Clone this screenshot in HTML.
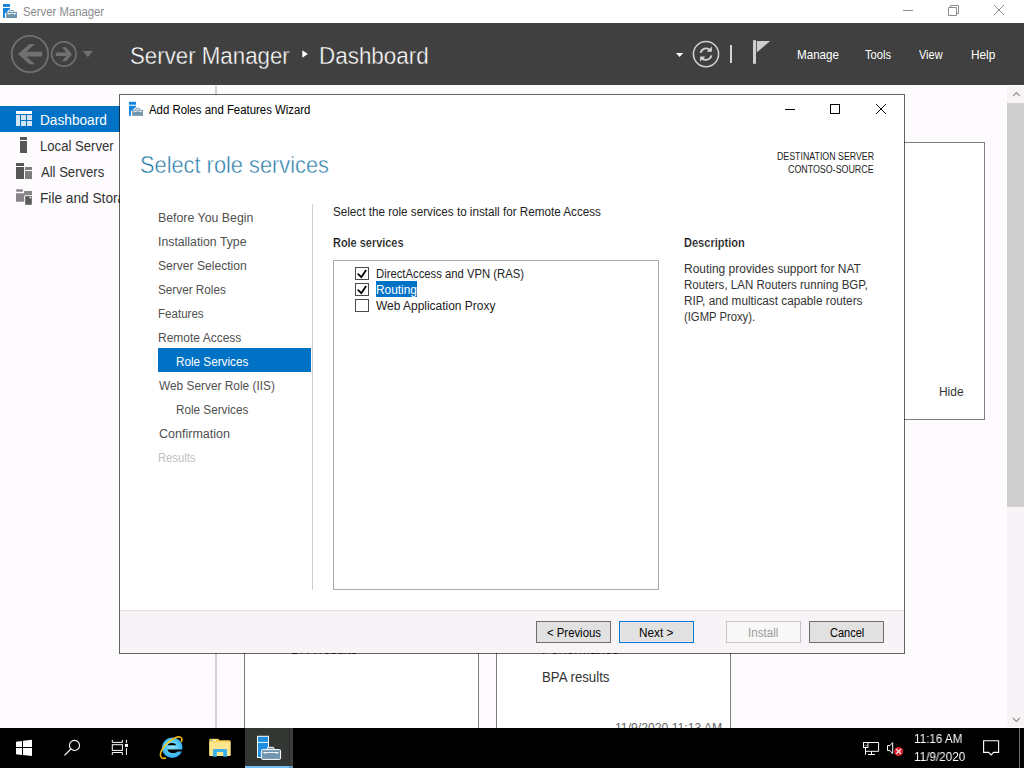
<!DOCTYPE html>
<html lang="en">
<head>
<meta charset="utf-8">
<title>Server Manager</title>
<style>
html,body{margin:0;padding:0;}
body{width:1024px;height:768px;overflow:hidden;position:relative;background:#fefbfe;font-family:"Liberation Sans",sans-serif;}
.a{position:absolute;}
.t{position:absolute;white-space:pre;line-height:normal;transform-origin:0 0;font-family:"Liberation Sans",sans-serif;}
#titlebar{left:0;top:0;width:1024px;height:23px;background:#ffffff;}
#header{left:0;top:23px;width:1024px;height:62px;background:#404040;}
#navsel{left:0;top:106px;width:216px;height:26px;background:#0072c6;}
#vline{left:215px;top:86px;width:2px;height:642px;background:#d2d0d2;}
.panel{background:#ffffff;border:1px solid #7f7d7f;box-sizing:border-box;}
#scroll{left:1007px;top:86px;width:17px;height:641px;background:#f7f3f7;}
#thumb{left:1007px;top:103px;width:17px;height:404px;background:#cecece;}
#taskbar{left:0;top:728px;width:1024px;height:40px;background:#000000;}
#dialog{left:119px;top:94px;width:786px;height:560px;background:#ffffff;background-clip:padding-box;border:1px solid rgba(0,0,0,0.61);box-sizing:border-box;}
#footer{left:120px;top:610px;width:784px;height:43px;background:#f7f3f7;border-top:1px solid #e0dde0;box-sizing:border-box;}
#wsel{left:158px;top:348px;width:153px;height:24px;background:#0072c6;}
#wsep{left:312px;top:204px;width:1px;height:386px;background:#d0d0d0;}
#list{left:333px;top:260px;width:326px;height:330px;border:1px solid #aba7ad;box-sizing:border-box;background:#fff;}
.cb{width:14px;height:13px;border:1px solid #4a4a4a;box-sizing:border-box;background:#fff;left:355px;}
#rsel{left:376px;top:281px;width:41px;height:16px;background:#0072c6;}
.btn{top:621px;width:75px;height:22px;box-sizing:border-box;background:#e1e1e1;border:1px solid #6f6f6f;}
</style>
</head>
<body>
<!-- ===== main window ===== -->
<div class="a" id="titlebar"></div>
<div class="a" id="header"></div>
<div class="a" id="navsel"></div>
<div class="a" id="vline"></div>
<div class="a panel" style="left:860px;top:142px;width:125px;height:278px;"></div>
<div class="a panel" style="left:244px;top:600px;width:235px;height:140px;"></div>
<div class="a panel" style="left:496px;top:600px;width:235px;height:140px;"></div>
<div class="a" id="scroll"></div>
<div class="a" id="thumb"></div>
<svg class="a" style="left:0;top:0" width="1024" height="768" viewBox="0 0 1024 768">
<!-- title bar app icon -->
<g id="appicon">
<rect x="3" y="4" width="7" height="2.900" fill="#1583e0"/>
<path d="M3 8h7v1.100L5.600 12.900L4.900 13.300V18H3z" fill="#1583e0"/>
<path d="M9.800 12v-0.800q0-0.700 0.700-0.700h2.400q0.700 0 0.700 0.700V12" fill="none" stroke="#6e93ad" stroke-width="1"/>
<rect x="6.200" y="12" width="10.800" height="6" fill="#6e93ad"/>
<path d="M7 12.900h9.400l-0.500 0.900h-0.700l-0.700 1.200l-0.700-1.200h-4.200l-0.700 1.200l-0.700-1.200h-0.700z" fill="#ffffff"/>
</g>
<!-- window controls -->
<g stroke="#8a8a8a" stroke-width="1" fill="none">
<path d="M903 10.5H913"/>
<path d="M948.5 7.5h8v8h-8zM950.5 7.5v-2h8v8h-2"/>
<path d="M994 5L1004 15M1004 5L994 15"/>
</g>
<!-- nav back / forward -->
<g fill="none" stroke="#717171">
<circle cx="29.900" cy="54" r="18.200" stroke-width="1.800"/>
<circle cx="63.900" cy="54.050" r="12.200" stroke-width="1.600"/>
</g>
<path d="M18.100 54.100L29.400 43.900H35L26.400 51.750H42.250V56.400H26.400L35 64.200H29.400z" fill="#717171"/>
<path d="M72 54.200L66.100 47.200H61.900L66.400 52.500H55.750V56H66.400L61.900 61.200H66.100z" fill="#717171"/>
<path d="M82.800 51.100H92.900L87.850 57.200z" fill="#717171"/>
<!-- breadcrumb arrow -->
<path d="M302.300 50.200L307.900 54L302.300 57.800z" fill="#ffffff"/>
<!-- header right icons -->
<path d="M676 53h7.2l-3.6 4z" fill="#ffffff"/>
<circle cx="706" cy="54.1" r="12.6" fill="none" stroke="#d2d2d2" stroke-width="1.5"/>
<g fill="none" stroke="#d2d2d2" stroke-width="1.9">
<path d="M700.6 52.8a5.6 5.6 0 0 1 9.6-2.6"/>
<path d="M711.4 55.4a5.6 5.6 0 0 1-9.6 2.6"/>
</g>
<path d="M711.9 46.6v5.2h-5.2z" fill="#d2d2d2"/>
<path d="M700.1 61.6v-5.2h5.2z" fill="#d2d2d2"/>
<rect x="730" y="45" width="2" height="18" fill="#d2d2d2"/>
<rect x="753" y="40.2" width="3" height="23.6" fill="#cfcfcf"/>
<path d="M756.8 41h13.4l-13.4 11.6z" fill="#cfcfcf"/>
<!-- side nav icons -->
<rect x="16" y="111" width="16" height="3" fill="#ffffff"/>
<g fill="#d3e5f7">
<rect x="16" y="115" width="4" height="11"/>
<rect x="21" y="115" width="5" height="5"/><rect x="27" y="115" width="5" height="5"/>
<rect x="21" y="121" width="5" height="5"/><rect x="27" y="121" width="5" height="5"/>
</g>
<g fill="#575757">
<rect x="20" y="137" width="7" height="3"/><rect x="20" y="141" width="7" height="12"/>
<rect x="16" y="163" width="8" height="3"/><rect x="16" y="167" width="8" height="12"/>
</g>
<g fill="#7e7e7e">
<rect x="25" y="167" width="7" height="3"/><rect x="25" y="171" width="7" height="8"/>
</g>
<rect x="16" y="189.200" width="7" height="2.500" rx="0.900" fill="#878587"/>
<path d="M16 193.300h7.200q1 0 1-1v-1.200H32v10.600H16z" fill="#878587"/>
<path d="M24.200 205.800v-9.600q0-1 1-1h6.500q1 0 1 1v9.600z" fill="#fefbfe"/>
<rect x="25.200" y="196.200" width="6.600" height="8.600" fill="#595959"/>
<circle cx="30.300" cy="197.700" r="0.900" fill="#e8e6e8"/>
<!-- scrollbar arrows -->
<g fill="none" stroke="#8c8c8c" stroke-width="1.1">
<path d="M1013 96.200L1016.400 92.600L1019.800 96.200"/>
<path d="M1013 718L1016.400 721.500L1019.800 718"/>
</g>

</svg>
<span class="t" style="left:22.98px;top:5px;font-size:12px;color:#8a8a8a;font-weight:400;transform:scaleX(0.9429);">Server Manager</span>
<span class="t" style="left:129.51px;top:42px;font-size:24.5px;color:#ffffff;font-weight:400;transform:scaleX(0.9094);-webkit-text-stroke:0.4px #404040;">Server Manager</span>
<span class="t" style="left:318.62px;top:42px;font-size:24.5px;color:#ffffff;font-weight:400;transform:scaleX(0.9156);-webkit-text-stroke:0.4px #404040;">Dashboard</span>
<span class="t" style="left:796.81px;top:47px;font-size:13px;color:#ffffff;font-weight:400;transform:scaleX(0.8944);">Manage</span>
<span class="t" style="left:864.82px;top:47px;font-size:13px;color:#ffffff;font-weight:400;transform:scaleX(0.8627);">Tools</span>
<span class="t" style="left:918.78px;top:47px;font-size:13px;color:#ffffff;font-weight:400;transform:scaleX(0.8444);">View</span>
<span class="t" style="left:970.89px;top:47px;font-size:13px;color:#ffffff;font-weight:400;transform:scaleX(0.9091);">Help</span>
<span class="t" style="left:39.96px;top:112px;font-size:14px;color:#ffffff;font-weight:400;transform:scaleX(0.9755);">Dashboard</span>
<span class="t" style="left:39.94px;top:138px;font-size:14px;color:#333333;font-weight:400;transform:scaleX(0.9369);">Local Server</span>
<span class="t" style="left:40.82px;top:164px;font-size:14px;color:#333333;font-weight:400;transform:scaleX(0.9334);">All Servers</span>
<span class="t" style="left:39.56px;top:190px;font-size:14px;color:#333333;font-weight:400;transform:scaleX(0.9771);">File and Storage Services</span>
<span class="t" style="left:938.85px;top:385px;font-size:12.5px;color:#333333;font-weight:400;transform:scaleX(0.9549);">Hide</span>
<span class="t" style="left:290.75px;top:641px;font-size:14px;color:#333333;font-weight:400;transform:scaleX(0.9251);">BPA results</span>
<span class="t" style="left:541.68px;top:641px;font-size:14px;color:#333333;font-weight:400;transform:scaleX(0.9626);">Performance</span>
<span class="t" style="left:541.73px;top:669px;font-size:14px;color:#333333;font-weight:400;transform:scaleX(0.9461);">BPA results</span>
<span class="t" style="left:614.70px;top:720px;font-size:13px;color:#666666;font-weight:400;transform:scaleX(0.9370);">11/9/2020 11:13 AM</span>
<!-- ===== taskbar ===== -->
<div class="a" id="taskbar"></div>
<!-- ===== dialog ===== -->
<div class="a" id="dialog"></div>
<div class="a" id="footer"></div>
<div class="a" id="wsel"></div>
<div class="a" id="wsep"></div>
<div class="a" id="list"></div>
<div class="a cb" style="top:267px"></div>
<div class="a cb" style="top:283px"></div>
<div class="a cb" style="top:299px"></div>
<div class="a" id="rsel"></div>
<div class="a btn" style="left:536px"></div>
<div class="a btn" style="left:619px;border-color:#0078d7;box-shadow:inset 0 0 0 1px #ece7e6;"></div>
<div class="a btn" style="left:726px;background:#f9f8f9;border-color:#c2c5c5;"></div>
<div class="a btn" style="left:809px"></div>
<svg class="a" style="left:0;top:0" width="1024" height="768" viewBox="0 0 1024 768">
<!-- dialog icon -->
<g transform="translate(126,97.8)">
<rect x="3" y="4" width="7" height="2.900" fill="#1583e0"/>
<path d="M3 8h7v1.100L5.600 12.900L4.900 13.300V18H3z" fill="#1583e0"/>
<path d="M9.800 12v-0.800q0-0.700 0.700-0.700h2.400q0.700 0 0.700 0.700V12" fill="none" stroke="#6e93ad" stroke-width="1"/>
<rect x="6.200" y="12" width="10.800" height="6" fill="#6e93ad"/>
<path d="M7 12.900h9.400l-0.500 0.900h-0.700l-0.700 1.200l-0.700-1.200h-4.200l-0.700 1.200l-0.700-1.200h-0.700z" fill="#ffffff"/>
</g>
<!-- dialog window controls -->
<g stroke="#000000" stroke-width="1" fill="none">
<path d="M785 109.5H795"/>
<rect x="830.5" y="104.5" width="9" height="9"/>
<path d="M876 104L886 114M886 104L876 114" stroke-width="0.95"/>
</g>
<!-- check marks -->
<g fill="none" stroke="#000000" stroke-width="1.7">
<path d="M357.7 273.7L361.3 277.1L366.2 270"/>
<path d="M357.7 289.7L361.3 293.1L366.2 286"/>
</g>
<!-- taskbar: active app -->
<rect x="245" y="728" width="48" height="40" fill="#343634"/>
<rect x="289" y="728" width="1" height="40" fill="#2b2d2b"/>
<rect x="290" y="728" width="3" height="40" fill="#3b3d3b"/>
<rect x="245" y="766" width="44" height="2" fill="#76c0f5"/>
<rect x="289" y="766" width="4" height="2" fill="#5d9ac8"/>
<!-- start -->
<path d="M16 741.700L22 740.900V746.900H16zM23 740.800L32 739.800V746.900H23zM16 748.100H22V755L16 754.200zM23 748.100H32V756.100L23 755.100z" fill="#ffffff"/>
<!-- search -->
<circle cx="74.500" cy="745.400" r="5.050" fill="none" stroke="#ffffff" stroke-width="1.100"/>
<path d="M70.800 749.100L64.500 755.400" stroke="#ffffff" stroke-width="1.300" fill="none"/>
<!-- task view -->
<g fill="none" stroke="#ffffff" stroke-width="1">
<path d="M112.300 739.900v2.500h10.100v-2.500"/>
<rect x="112.300" y="744.700" width="10.100" height="5.700"/>
<path d="M112.300 755v-2.500h10.100v2.500"/>
<path d="M126.400 739.900v3M126.400 748v7"/>
</g>
<rect x="124.900" y="743.900" width="3.100" height="3" fill="#ffffff"/>
<!-- IE -->
<defs>
<radialGradient id="ieg" cx="0.5" cy="0.45" r="0.6"><stop offset="0" stop-color="#8fe6ff"/><stop offset="0.6" stop-color="#4cc4f5"/><stop offset="1" stop-color="#2a9fe6"/></radialGradient>
<linearGradient id="iey" x1="0" y1="1" x2="1" y2="0"><stop offset="0" stop-color="#e9a800"/><stop offset="0.5" stop-color="#ffd63a"/><stop offset="1" stop-color="#e9ae00"/></linearGradient>
</defs>
<circle cx="172.200" cy="747.800" r="10.300" fill="url(#ieg)"/>
<path d="M167.600 745.300a4.400 3 0 0 1 8.600 0z" fill="#000000"/>
<path d="M167.600 749.600h15.400v1.900h-5.400c-0.800 1-2.600 1.700-5 1.700c-3 0-4.800-1.500-5-3.600z" fill="#000000"/>
<path d="M165.400 758.200c-3.200 0.600-5.600-0.600-4.900-4.600c1.200-6 8.400-13 14.800-15.800c3.600-1.500 6.400-1.100 6.600 1.400c0 0.800-0.200 1.600-0.600 2.400" fill="none" stroke="url(#iey)" stroke-width="1.700" stroke-linecap="round"/>
<!-- folder -->
<path d="M209.300 739.800q0-1 1-1h7.700q0.700 0 1 0.700l0.300 0.700h10.200q1 0 1 1v13.700q0 1-1 1h-19.200q-1 0-1-1z" fill="#f6ca45"/>
<rect x="209.300" y="741.800" width="21.200" height="14.100" rx="0.800" fill="#fde68e"/>
<rect x="211.600" y="739.700" width="4.600" height="1.300" fill="#fff6d0"/>
<rect x="211.200" y="739.700" width="1.300" height="1.300" fill="#3bb3ea"/>
<path d="M213 756.800v-6.600q0-1.200 1.200-1.200h11.600q1.200 0 1.200 1.200v6.600h-3.800v-4.700h-6.400v4.700z" fill="#3bb3ea"/>
<!-- server manager taskbar icon -->
<rect x="257.500" y="736.300" width="11" height="21.200" fill="#1e8ee0" stroke="#ffffff" stroke-width="1"/>
<rect x="258" y="741.900" width="10" height="0.900" fill="#ffffff"/>
<path d="M267.300 750v-1.700q0-1 1-1h4.700q1 0 1 1v1.700" fill="#7295b0" stroke="#ffffff" stroke-width="1"/>
<rect x="261.400" y="749.600" width="19.200" height="9.800" rx="1.200" fill="#7295b0" stroke="#ffffff" stroke-width="1"/>
<path d="M263.200 752.500h15.400" stroke="#ffffff" stroke-width="0.900"/>
<rect x="264.600" y="752.500" width="1.300" height="1.300" fill="#ffffff"/><rect x="276" y="752.500" width="1.300" height="1.300" fill="#ffffff"/>
<!-- tray: network -->
<g fill="none" stroke="#ffffff" stroke-width="1">
<path d="M867.900 742.500h10.700v8.800h-12.700"/>
<rect x="863.500" y="742.500" width="4.400" height="5"/>
<path d="M865 744.800v0.800l0.700 0.700l0.700-0.700v-0.800" stroke-width="0.600"/>
<path d="M865.500 747.500v7.300M871.500 751.300v3.200M868 754.500h7"/>
</g>
<!-- tray: speaker -->
<path d="M887.500 745.600h2.400l2.800-3v11l-2.800-3h-2.400z" fill="none" stroke="#ffffff" stroke-width="1"/>
<circle cx="898.600" cy="751.500" r="4.500" fill="#e2222e"/>
<path d="M896.200 749.100l4.800 4.800M901 749.100l-4.800 4.800" stroke="#ffffff" stroke-width="1.150"/>
<!-- notification -->
<path d="M983.600 740.800h15v11.600h-5l-2.500 2.600l-2.500-2.600h-5z" fill="none" stroke="#ffffff" stroke-width="1.100"/>
<!-- show desktop sep -->
<rect x="1019" y="728" width="1" height="40" fill="#6a6a6a"/>

</svg>
<span class="t" style="left:913.83px;top:732px;font-size:12px;color:#ffffff;font-weight:400;transform:scaleX(0.9718);will-change:transform;">11:16 AM</span>
<span class="t" style="left:913.81px;top:750px;font-size:12px;color:#ffffff;font-weight:400;transform:scaleX(0.9765);will-change:transform;">11/9/2020</span>
<span class="t" style="left:148.51px;top:103px;font-size:12px;color:#000000;font-weight:400;transform:scaleX(0.9493);">Add Roles and Features Wizard</span>
<span class="t" style="left:139.65px;top:151px;font-size:24px;color:#1f78a8;font-weight:400;transform:scaleX(0.9080);-webkit-text-stroke:0.5px #ffffff;">Select role services</span>
<span class="t" style="left:776.62px;top:151px;font-size:10px;color:#1c1c1c;font-weight:400;transform:scaleX(0.8810);">DESTINATION SERVER</span>
<span class="t" style="left:787.71px;top:164px;font-size:10px;color:#1c1c1c;font-weight:400;transform:scaleX(0.8869);">CONTOSO-SOURCE</span>
<span class="t" style="left:157.61px;top:211px;font-size:12.5px;color:#505050;font-weight:400;transform:scaleX(0.9868);">Before You Begin</span>
<span class="t" style="left:157.51px;top:235px;font-size:12.5px;color:#505050;font-weight:400;transform:scaleX(0.9821);">Installation Type</span>
<span class="t" style="left:157.85px;top:259px;font-size:12.5px;color:#505050;font-weight:400;transform:scaleX(0.9672);">Server Selection</span>
<span class="t" style="left:157.85px;top:283px;font-size:12.5px;color:#505050;font-weight:400;transform:scaleX(0.9389);">Server Roles</span>
<span class="t" style="left:157.68px;top:307px;font-size:12.5px;color:#505050;font-weight:400;transform:scaleX(0.9246);">Features</span>
<span class="t" style="left:157.64px;top:331px;font-size:12.5px;color:#505050;font-weight:400;transform:scaleX(0.9591);">Remote Access</span>
<span class="t" style="left:175.86px;top:355px;font-size:12.5px;color:#fff;font-weight:400;transform:scaleX(0.9373);">Role Services</span>
<span class="t" style="left:158.91px;top:379px;font-size:12.5px;color:#505050;font-weight:400;transform:scaleX(0.9496);">Web Server Role (IIS)</span>
<span class="t" style="left:175.86px;top:403px;font-size:12.5px;color:#505050;font-weight:400;transform:scaleX(0.9373);">Role Services</span>
<span class="t" style="left:158.98px;top:427px;font-size:12.5px;color:#505050;font-weight:400;transform:scaleX(1.0014);">Confirmation</span>
<span class="t" style="left:157.70px;top:451px;font-size:12.5px;color:#c0c0c0;font-weight:400;transform:scaleX(0.8988);">Results</span>
<span class="t" style="left:332.85px;top:205px;font-size:12px;color:#222;font-weight:400;transform:scaleX(0.9726);">Select the role services to install for Remote Access</span>
<span class="t" style="left:332.54px;top:236px;font-size:12px;color:#111;font-weight:700;transform:scaleX(0.9111);-webkit-text-stroke:0.2px #fff;">Role services</span>
<span class="t" style="left:683.82px;top:236px;font-size:12px;color:#111;font-weight:700;transform:scaleX(0.9200);-webkit-text-stroke:0.2px #fff;">Description</span>
<span class="t" style="left:375.60px;top:267px;font-size:12px;color:#222;font-weight:400;transform:scaleX(0.9404);">DirectAccess and VPN (RAS)</span>
<span class="t" style="left:375.60px;top:283px;font-size:12px;color:#fff;font-weight:400;transform:scaleX(0.9889);">Routing</span>
<span class="t" style="left:375.76px;top:299px;font-size:12px;color:#222;font-weight:400;transform:scaleX(0.9962);">Web Application Proxy</span>
<span class="t" style="left:683.50px;top:262px;font-size:12px;color:#333;font-weight:400;transform:scaleX(0.9981);">Routing provides support for NAT</span>
<span class="t" style="left:683.50px;top:278px;font-size:12px;color:#333;font-weight:400;transform:scaleX(0.9610);">Routers, LAN Routers running BGP,</span>
<span class="t" style="left:683.50px;top:294px;font-size:12px;color:#333;font-weight:400;transform:scaleX(0.9812);">RIP, and multicast capable routers</span>
<span class="t" style="left:683.82px;top:310px;font-size:12px;color:#333;font-weight:400;transform:scaleX(0.9379);">(IGMP Proxy).</span>
<span class="t" style="left:546.68px;top:626px;font-size:12px;color:#000;font-weight:400;transform:scaleX(0.9460);">&lt; Previous</span>
<span class="t" style="left:638.90px;top:626px;font-size:12px;color:#000;font-weight:400;transform:scaleX(0.9814);">Next &gt;</span>
<span class="t" style="left:747.92px;top:626px;font-size:12px;color:#9a9a9a;font-weight:400;transform:scaleX(0.9693);">Install</span>
<span class="t" style="left:829.67px;top:626px;font-size:12px;color:#000;font-weight:400;transform:scaleX(0.9177);">Cancel</span>
</body>
</html>
